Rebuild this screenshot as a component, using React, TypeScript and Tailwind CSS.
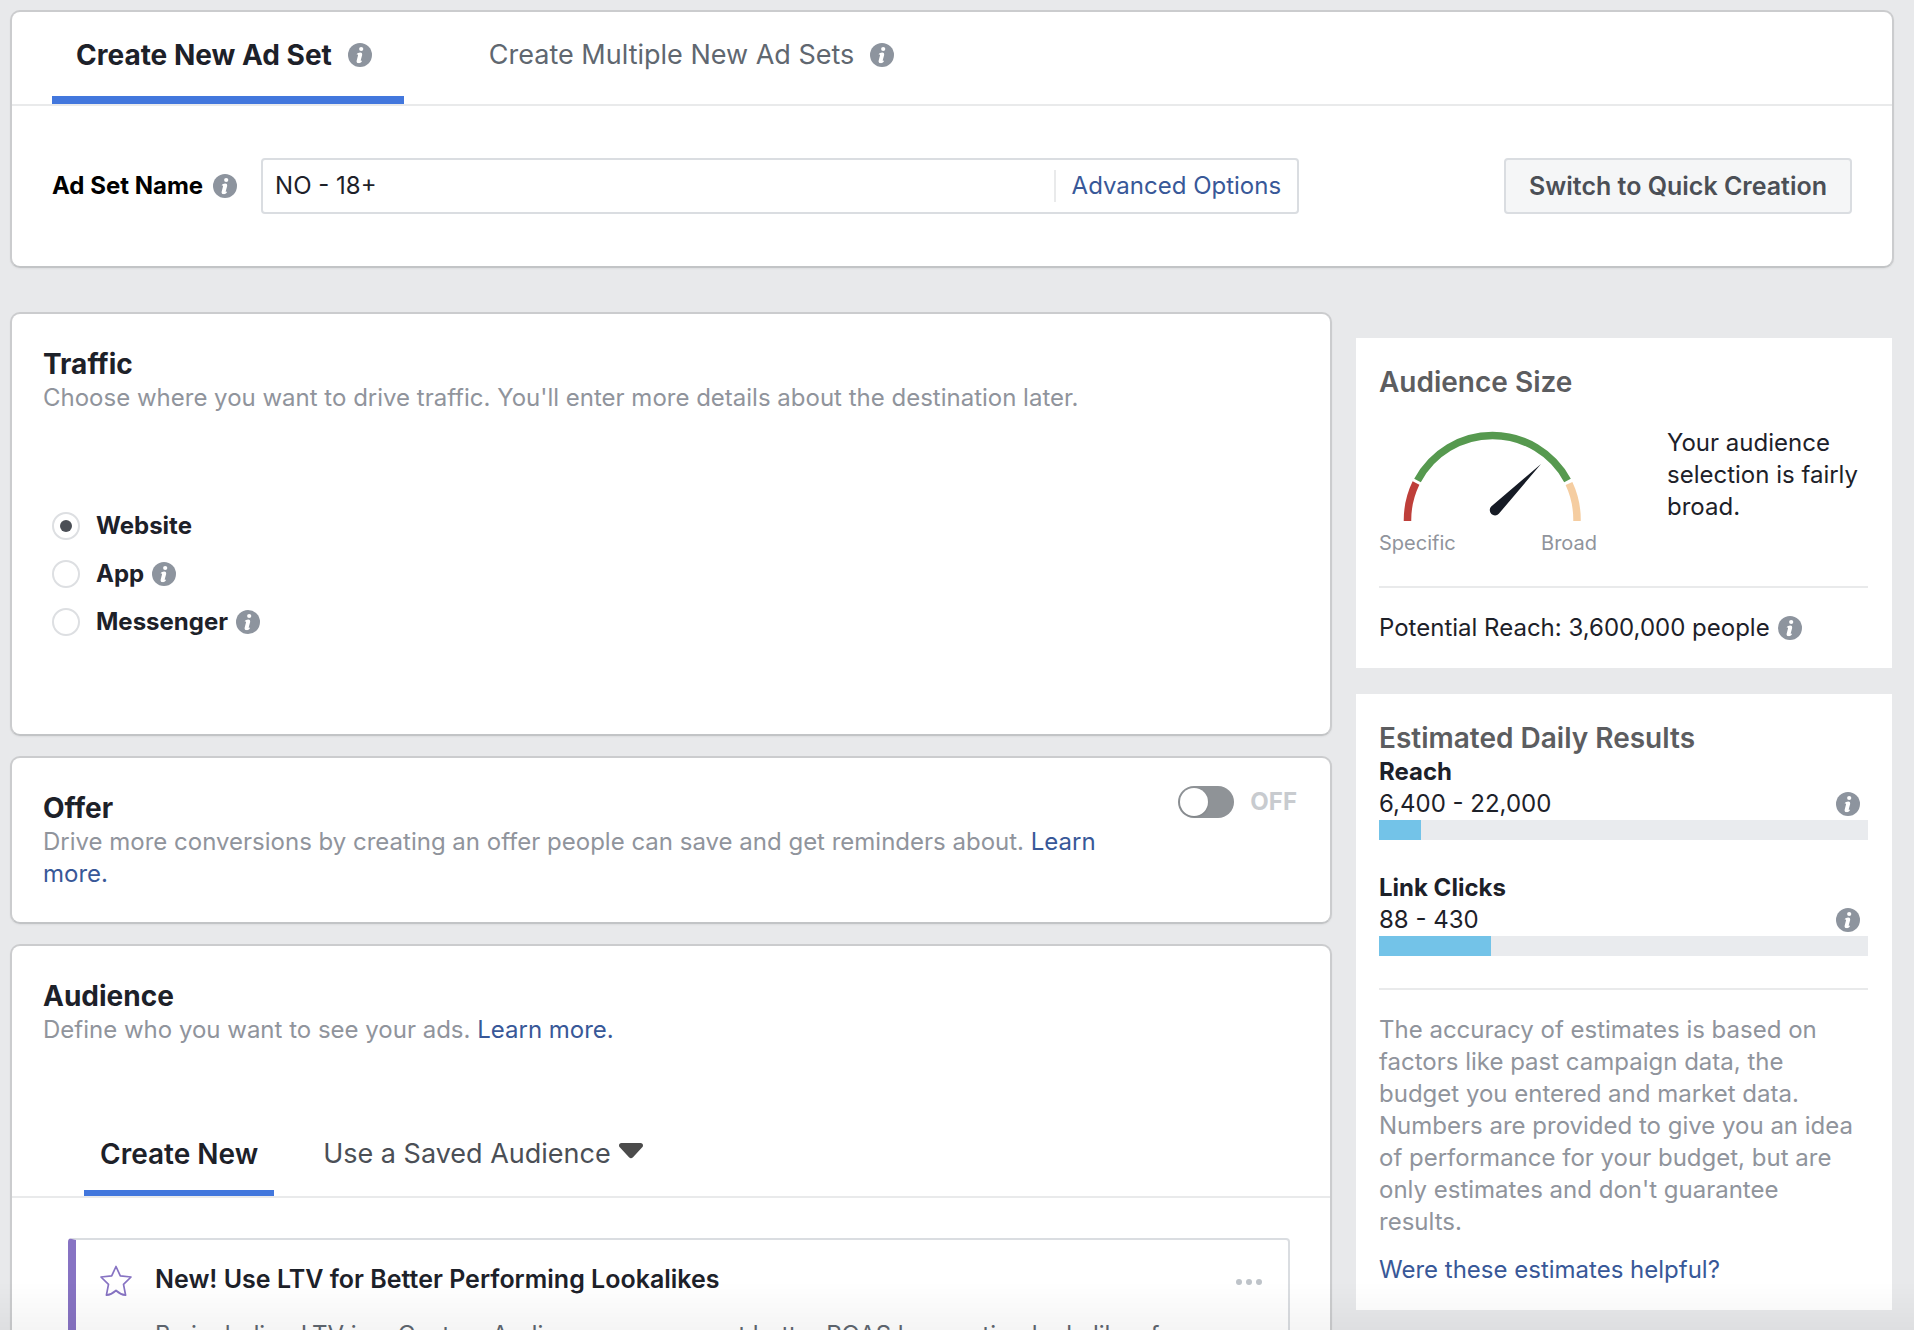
import { useState, type ReactNode } from "react";

const DESTINATIONS = [
  { id: "website", label: "Website", hint: false },
  { id: "app", label: "App", hint: true },
  { id: "messenger", label: "Messenger", hint: true },
];

const ESTIMATES = [
  { label: "Reach", range: "6,400 - 22,000", percent: 8.6 },
  { label: "Link Clicks", range: "88 - 430", percent: 23 },
];

function InfoIcon() {
  return (
    <svg
      viewBox="0 0 24 24"
      className="size-6 shrink-0"
      role="img"
      aria-label="More information"
    >
      <circle cx="12" cy="12" r="12" fill="#8d949e" />
      <circle cx="13.2" cy="6" r="2.1" fill="#fff" />
      <path
        d="M8.6 11.4c.9-1.300 2.300-2 3.700-1.900 1.600.1 2.200 1.200 1.800 2.800l-1.300 4.700c-.2.8 0 1.100.7.8l.6-.3-.3 1c-.9 1.300-2.200 1.800-3.500 1.600-1.400-.2-2-1.200-1.600-2.700l1.300-4.800c.2-.8-.1-1.200-.7-1.200z"
        fill="#fff"
      />
    </svg>
  );
}

function Card({ children }: { children: ReactNode }) {
  return (
    <section className="rounded-[10px] border-2 border-[#cbccce] border-b-[#c2c4c6] bg-white shadow-xs">
      {children}
    </section>
  );
}

function CardTitle({ children }: { children: ReactNode }) {
  return (
    <h2 className="text-[28px] leading-[35px] font-bold text-[#1d2129]">{children}</h2>
  );
}

function AdSetHeader() {
  const [name, setName] = useState("NO - 18+");

  return (
    <Card>
      <div role="tablist" className="flex h-[94px] border-b-2 border-[#e9eaeb] pl-10">
        <button
          role="tab"
          aria-selected="true"
          className="flex items-center gap-4 border-b-8 border-[#4277dd] pt-3.5 pr-8 pb-3 pl-6 text-[28px] leading-[34px] font-bold text-[#1d2129]"
        >
          Create New Ad Set
          <InfoIcon />
        </button>
        <button
          role="tab"
          aria-selected="false"
          className="ml-[85px] flex items-center gap-4 border-b-8 border-transparent pt-3.5 pb-3 text-[27px] leading-[34px] text-[#606770]"
        >
          Create Multiple New Ad Sets
          <InfoIcon />
        </button>
      </div>

      <div className="flex items-center px-10 py-[52px]">
        <label
          htmlFor="ad-set-name"
          className="mr-2.5 text-[24px] leading-8 font-bold text-black"
        >
          Ad Set Name
        </label>
        <InfoIcon />
        <div className="ml-6 flex h-14 max-w-[1038px] flex-1 items-center rounded-sm border-2 border-[#dadde1] bg-white">
          <input
            id="ad-set-name"
            type="text"
            value={name}
            onChange={(e) => setName(e.target.value)}
            className="min-w-0 flex-1 px-3 text-[24px] leading-8 text-[#1d2129] outline-none"
          />
          <a
            href="#advanced"
            className="border-l-2 border-[#e9eaeb] px-4 text-[24px] leading-8 text-[#385898]"
          >
            Advanced Options
          </a>
        </div>
        <button className="ml-auto h-14 rounded-sm border-2 border-[#dadde1] bg-[#f5f6f7] px-[23px] text-[25px] leading-8 font-semibold text-[#4b4f56]">
          Switch to Quick Creation
        </button>
      </div>
    </Card>
  );
}

function TrafficCard() {
  const [destination, setDestination] = useState("website");

  return (
    <Card>
      <div className="px-[31px] pt-[33px] pb-[88px]">
        <CardTitle>Traffic</CardTitle>
        <p className="text-[24px] leading-8 text-[#90949c]">
          Choose where you want to drive traffic. You'll enter more details about the
          destination later.
        </p>
        <div className="mt-[88px] pl-[9px]">
          {DESTINATIONS.map((d) => (
            <div key={d.id} className="flex h-12 items-center">
              <input
                type="radio"
                name="destination"
                id={d.id}
                checked={destination === d.id}
                onChange={() => setDestination(d.id)}
                className="grid size-7 appearance-none place-items-center rounded-full border-2 border-[#dddfe2] bg-white before:size-3 before:rounded-full checked:before:bg-[#4b4f56]"
              />
              <label
                htmlFor={d.id}
                className="mr-2 ml-4 text-[24px] leading-8 font-bold text-[#1d2129]"
              >
                {d.label}
              </label>
              {d.hint && <InfoIcon />}
            </div>
          ))}
        </div>
      </div>
    </Card>
  );
}

function OfferCard() {
  const [enabled, setEnabled] = useState(false);

  return (
    <Card>
      <div className="flex justify-between gap-10 pt-[33px] pr-[33px] pb-8 pl-[31px]">
        <div>
          <CardTitle>Offer</CardTitle>
          <p className="text-[24px] leading-8 text-[#90949c]">
            Drive more conversions by creating an offer people can save and get reminders
            about.{" "}
            <a href="#offer-help" className="text-[#385898]">
              Learn more.
            </a>
          </p>
        </div>
        <label className="-mt-[5px] flex h-8 shrink-0 items-center gap-4 text-[24px] leading-8 font-bold text-[#c8cbcf]">
          <input
            type="checkbox"
            role="switch"
            checked={enabled}
            onChange={(e) => setEnabled(e.target.checked)}
            className="flex h-8 w-14 appearance-none items-center rounded-full bg-[#8f9397] px-0.5 before:size-7 before:rounded-full before:bg-white before:shadow checked:justify-end checked:bg-[#4277dd]"
          />
          {enabled ? "ON" : "OFF"}
        </label>
      </div>
    </Card>
  );
}

function AudienceCard() {
  return (
    <Card>
      <div className="px-[31px] pt-[33px]">
        <CardTitle>Audience</CardTitle>
        <p className="text-[24px] leading-8 text-[#90949c]">
          Define who you want to see your ads.{" "}
          <a href="#audience-help" className="text-[#385898]">
            Learn more.
          </a>
        </p>
      </div>

      <div role="tablist" className="mt-[91px] flex border-b-2 border-[#e9eaeb] pl-[72px]">
        <button
          role="tab"
          aria-selected="true"
          className="border-b-6 border-[#4277dd] px-4 pb-[19px] text-[28px] leading-[34px] font-semibold text-[#1d2129]"
        >
          Create New
        </button>
        <button
          role="tab"
          aria-selected="false"
          className="ml-[49px] flex items-center gap-2 border-b-6 border-transparent pb-[19px] text-[27px] leading-[34px] text-[#4b4f56]"
        >
          Use a Saved Audience
          <svg viewBox="0 0 24 16" className="mb-1.5 h-4 w-6" aria-hidden="true">
            <path
              d="M2.5 0h19C23.1 0 24 1 24 2.4c0 .9-.4 1.6-1 2.200l-9 9.600c-1.300 1.400-2.700 1.400-4 0L1 4.600C.4 4 0 3.300 0 2.400 0 1 .9 0 2.500 0z"
              fill="#4b4b4b"
            />
          </svg>
        </button>
      </div>

      <div className="pt-10 pr-10 pb-10 pl-14">
        <article className="flex items-start rounded-sm border-2 border-l-8 border-[#dadde1] border-l-[#8773c3] pt-[23px] pr-[26px] pb-8 pl-6">
          <svg viewBox="0 0 32 32" className="mt-0.5 size-8 shrink-0" aria-hidden="true">
            <path
              d="M16 1.5l4.3 9.4L31 12l-7.500 7.400 2.100 10.800c-3.500-.3-6.600-2-9.600-4.700-3 2.700-6.100 4.400-9.600 4.700l2.100-10.800L1 12l10.700-1.100z"
              fill="none"
              stroke="#8773c3"
              strokeWidth="1.7"
              strokeLinejoin="round"
            />
          </svg>
          <div className="ml-[23px] min-w-0 flex-1">
            <h3 className="text-[25px] leading-8 font-semibold text-[#1d2129]">
              New! Use LTV for Better Performing Lookalikes
            </h3>
            <p className="mt-6 text-[24px] leading-8 text-[#606770]">
              By including LTV in a Custom Audience, you can get better ROAS by creating
              lookalikes from people with a high value to your business.
            </p>
          </div>
          <button aria-label="More options" className="mt-4 flex gap-1">
            <span className="size-1.5 rounded-full bg-[#bec3c9]" />
            <span className="size-1.5 rounded-full bg-[#bec3c9]" />
            <span className="size-1.5 rounded-full bg-[#bec3c9]" />
          </button>
        </article>
      </div>
    </Card>
  );
}

function AudienceGauge() {
  return (
    <div className="w-[218px] shrink-0">
      <svg viewBox="0 0 218 94" className="h-[94px] w-full" aria-hidden="true">
        <g fill="none" strokeWidth="7.5">
          <path d="M28.500 94A85 85 0 0 1 37 56" stroke="#be3f3a" />
          <path d="M38.500 53.500A85 85 0 0 1 188.500 53.500" stroke="#56994f" />
          <path d="M190 56.500A85 85 0 0 1 198 94" stroke="#f5cda1" />
        </g>
        <path d="M162 37L119.800 86.800a5.200 5.200 0 1 1-7.600-7.200z" fill="#161b25" />
      </svg>
      <div className="mt-2.5 flex justify-between text-[20px] leading-6 text-[#90949c]">
        <span>Specific</span>
        <span>Broad</span>
      </div>
    </div>
  );
}

function Sidebar() {
  return (
    <aside className="mt-[26px] mr-0.5 flex w-[536px] shrink-0 flex-col gap-[26px] self-start">
      <section className="bg-white px-6 pt-[27px] pb-6 pl-[23px]">
        <h2 className="text-[28px] leading-[34px] font-semibold text-[#5c5d60]">
          Audience Size
        </h2>
        <div className="mt-7 flex gap-[70px]">
          <AudienceGauge />
          <p className="text-[24px] leading-8 text-[#1d2129]">
            Your audience selection is fairly broad.
          </p>
        </div>
        <p className="mt-[31px] flex items-center gap-2 border-t-2 border-[#e9eaeb] pt-6 text-[24px] leading-8 text-[#1d2129]">
          Potential Reach: 3,600,000 people
          <InfoIcon />
        </p>
      </section>

      <section className="bg-white px-6 pt-[27px] pb-6 pl-[23px]">
        <h2 className="text-[28px] leading-[35px] font-semibold text-[#5c5d60]">
          Estimated Daily Results
        </h2>
        <div className="flex flex-col gap-[31px] text-[24px] leading-8 text-[#1d2129]">
          {ESTIMATES.map((e) => (
            <div key={e.label}>
              <h3 className="font-bold">{e.label}</h3>
              <div className="flex items-center justify-between pr-2">
                {e.range}
                <InfoIcon />
              </div>
              <div className="mb-px h-5 bg-[#e9ebee]">
                <div className="h-5 bg-[#73c3e8]" style={{ width: `${e.percent}%` }} />
              </div>
            </div>
          ))}
        </div>
        <p className="mt-[31px] border-t-2 border-[#e9eaeb] pt-6 text-[24px] leading-8 text-[#90949c]">
          The accuracy of estimates is based on factors like past campaign data, the
          budget you entered and market data. Numbers are provided to give you an idea of
          performance for your budget, but are only estimates and don't guarantee results.
        </p>
        <p className="mt-4 text-[24px] leading-8">
          <a href="#feedback" className="text-[#385898]">
            Were these estimates helpful?
          </a>
        </p>
      </section>
    </aside>
  );
}

export default function App() {
  return (
    <div className="h-screen overflow-hidden bg-[#e8e9eb] pt-2.5 pr-5 pl-2.5 font-['Inter',sans-serif]">
      <AdSetHeader />
      <div className="mt-11 flex gap-6">
        <main className="flex min-w-0 flex-1 flex-col gap-5">
          <TrafficCard />
          <OfferCard />
          <AudienceCard />
        </main>
        <Sidebar />
      </div>
      {/* fade above the window's bottom edge */}
      <div className="pointer-events-none fixed inset-x-0 bottom-0 h-12 bg-linear-to-b from-transparent to-black/4" />
    </div>
  );
}
